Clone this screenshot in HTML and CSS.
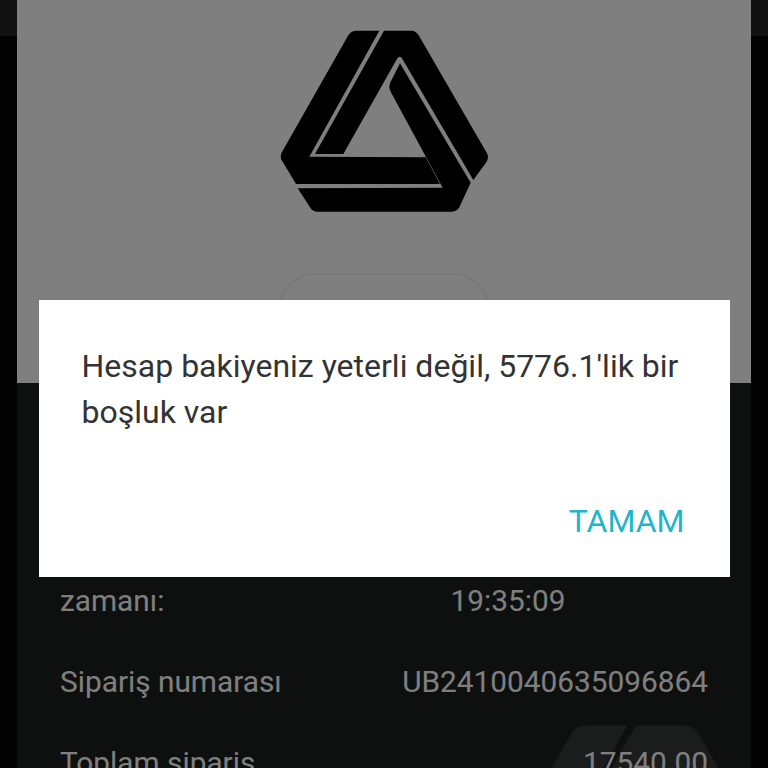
FILE: index.html
```html
<!DOCTYPE html>
<html lang="tr">
<head>
    <meta charset="UTF-8">
    <meta name="viewport" content="width=device-width, initial-scale=1.0">
    <title>Sipariş</title>
    <link rel="stylesheet" href="styles.css">
</head>
<body>
    <svg class="symbols" width="0" height="0">
        <symbol id="logo" viewBox="0 0 750 660">
            <path d="M290 62 L358 62 L148 440 L497 442 L540 522 L108 522 L66 452 Q58 440 66 426 L265 76 Q272 62 290 62 Z"/>
            <path d="M372 62 L455 62 Q468 62 476 76 L680 428 Q688 440 680 455 L640 510 L425 143 Q418 136 412 145 L250 432 L165 432 Z"/>
            <path d="M420 160 L632 518 L598 592 Q590 605 575 605 L170 605 Q158 605 150 592 L113 535 L548 533 L392 245 Q384 230 392 215 Z"/>
        </symbol>
    </svg>

    <div class="order-panel">
        <div class="hero">
            <svg class="hero-logo"><use href="#logo"/></svg>
            <div class="hero-button"></div>
        </div>

        <div class="details">
            <svg class="watermark"><use href="#logo"/></svg>
            <div class="row row-time">
                <span class="label">Sipariş<br>zamanı:</span>
                <span class="value">2024-10-04<br>19:35:09</span>
            </div>
            <div class="row">
                <span class="label">Sipariş numarası</span>
                <span class="value">UB2410040635096864</span>
            </div>
            <div class="row">
                <span class="label">Toplam sipariş</span>
                <span class="value">17540.00</span>
            </div>
        </div>
    </div>

    <div class="overlay">
        <div class="dialog">
            <p class="dialog-text">Hesap bakiyeniz yeterli değil, 5776.1'lik bir boşluk var</p>
            <div class="dialog-actions">
                <button type="button" class="dialog-btn">TAMAM</button>
            </div>
        </div>
    </div>
</body>
</html>
```

FILE: styles.css
```css
html, body {
    height: 100%;
}
body {
    margin: 0;
    overflow: hidden;
    font-family: Roboto, "Liberation Sans", sans-serif;
    background: linear-gradient(#222 36px, #040404 36px);
}
.symbols {
    display: block;
}
.order-panel {
    margin: 0 17px;
    height: 768px;
    background-color: #1d2020;
    position: relative;
    overflow: hidden;
}
.hero {
    height: 383px;
    box-sizing: border-box;
    padding-top: 10px;
    background-color: #fff;
    display: flex;
    flex-direction: column;
    align-items: center;
}
.hero-logo {
    width: 250px;
    height: 220px;
    margin-left: 1px;
    fill: #000;
}
.hero-button {
    width: 210px;
    height: 70px;
    margin-top: 43px;
    box-sizing: border-box;
    border: 2px solid #f2f2f2;
    border-radius: 35px;
}
.details {
    padding: 155px 43px 0;
    color: #fff;
    font-size: 29.8px;
    line-height: 42px;
    position: relative;
}
.watermark {
    position: absolute;
    left: 394px;
    top: 305px;
    width: 453px;
    height: 398px;
    fill: #363838;
}
.row {
    display: grid;
    grid-template-columns: 248px 1fr;
    align-items: center;
    margin-bottom: 39px;
    position: relative;
}
.value {
    text-align: right;
}
.row-time .value {
    text-align: center;
}
.overlay {
    position: fixed;
    top: 0;
    left: 0;
    right: 0;
    bottom: 0;
    background: rgba(0,0,0,0.5);
    display: flex;
    justify-content: center;
    align-items: flex-start;
}
.dialog {
    width: 691px;
    height: 277px;
    margin-top: 300px;
    box-sizing: border-box;
    padding: 43px 45px 0 43px;
    background: #fff;
    display: flex;
    flex-direction: column;
    justify-content: space-between;
}
.dialog-text {
    margin: 0;
    color: #333;
    font-size: 32px;
    line-height: 46px;
}
.dialog-actions {
    display: flex;
    justify-content: flex-end;
    padding-bottom: 37px;
}
.dialog-btn {
    padding: 0;
    border: none;
    background: none;
    color: #1fb6cc;
    font-family: Roboto, "Liberation Sans", sans-serif;
    font-size: 32px;
    line-height: 38px;
}
```
